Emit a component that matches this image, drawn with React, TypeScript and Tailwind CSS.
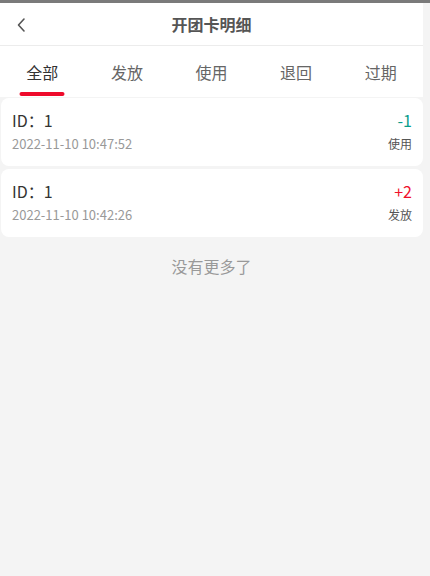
import React from "react";

const font = { fontFamily: '"Noto Sans CJK SC", "Noto Sans", sans-serif' };

const tabs = ["全部", "发放", "使用", "退回", "过期"];

const records = [
  { id: "1", time: "2022-11-10 10:47:52", amount: "-1", type: "使用", color: "text-[#0a9e8c]" },
  { id: "1", time: "2022-11-10 10:42:26", amount: "+2", type: "发放", color: "text-[#f0102c]" },
];

export default function App() {
  return (
    <div className="min-h-[576px] w-[430px] bg-[#f4f4f4]" style={font}>
      <div className="h-[3px] w-full bg-[#7a7a7a]" />
      <div className="w-[423px]">
        <div className="relative flex h-[43px] items-center justify-center border-b border-[#ececec] bg-white">
          <svg className="absolute left-[16px] top-[14px]" width="10" height="16" viewBox="0 0 10 16" fill="none">
            <path d="M8 2 L2.5 8 L8 14" stroke="#555" strokeWidth="1.6" strokeLinecap="round" strokeLinejoin="round" />
          </svg>
          <span className="text-[16px] font-bold text-[#555]">开团卡明细</span>
        </div>
        <div className="flex h-[51px] bg-white">
          {tabs.map((t, i) => (
            <div key={t} className="relative flex flex-1 items-center justify-center">
              <span className={`text-[16px] ${i === 0 ? "text-[#333]" : "text-[#666]"}`}>{t}</span>
              {i === 0 && (
                <div className="absolute bottom-[1px] left-1/2 h-[4px] w-[45px] -translate-x-1/2 rounded-full bg-[#ee0a2b]" />
              )}
            </div>
          ))}
        </div>
        <div className="mt-[1px] flex flex-col gap-[3px] pl-[1px]">
          {records.map((r, i) => (
            <div key={i} className="flex h-[68px] items-start justify-between rounded-[8px] bg-white px-[11px] pt-[11px]">
              <div className="flex flex-col gap-[4px]">
                <span className="text-[16px] leading-[22px] text-[#333]">ID：{r.id}</span>
                <span className="text-[13px] leading-[18px] text-[#999]">{r.time}</span>
              </div>
              <div className="flex flex-col items-end gap-[4px]">
                <span className={`text-[16px] leading-[22px] ${r.color}`}>{r.amount}</span>
                <span className="text-[12px] leading-[18px] text-[#555]">{r.type}</span>
              </div>
            </div>
          ))}
        </div>
        <div className="mt-[17px] text-center text-[16px] leading-[24px] text-[#999]">没有更多了</div>
      </div>
    </div>
  );
}
